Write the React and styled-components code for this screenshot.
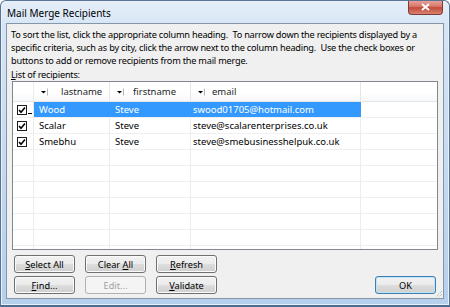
import React from 'react';
import styled, { createGlobalStyle } from 'styled-components';

const GlobalStyle = createGlobalStyle`
    html, body {
        margin: 0;
        padding: 0;
        background: #ffffff;
    }
    body {
        font-family: "Noto Sans", "Open Sans", sans-serif;
    }
`;

const columns = [
    { key: 'lastname', width: 76, headPad: 13, cellPad: 5 },
    { key: 'firstname', width: 81, headPad: 9, cellPad: 5 },
    { key: 'email', width: 170, headPad: 7, cellPad: 2 },
];

const recipients = [
    { lastname: 'Wood', firstname: 'Steve', email: 'swood01705@hotmail.com', selected: true },
    { lastname: 'Scalar', firstname: 'Steve', email: 'steve@scalarenterprises.co.uk' },
    { lastname: 'Smebhu', firstname: 'Steve', email: 'steve@smebusinesshelpuk.co.uk' },
];

const DropArrow = () => (
    <svg width="8" height="8" viewBox="0 0 8 8">
        <path d="M1 3 L6 3 L3.5 5.5 Z" fill="#000" />
        <line x1="7.5" y1="0.5" x2="7.5" y2="7.5" stroke="#b8b8b8" />
    </svg>
);

const CheckIcon = () => (
    <svg width="8" height="8" viewBox="0 0 8 8">
        <path d="M1 4 L3 6.2 L7 1.5" fill="none" stroke="#000" strokeWidth="1.6" />
    </svg>
);

export default function App() {
    const emptyRows = [...Array(7)];

    return (
        <>
            <GlobalStyle />
            <Window>
                <TitleBar>
                    <Title>Mail Merge Recipients</Title>
                    <CloseButton>
                        <svg width="9" height="8" viewBox="0 0 9 8">
                            <path d="M1 1 L8 7 M8 1 L1 7" stroke="#fff" strokeWidth="2" />
                        </svg>
                    </CloseButton>
                </TitleBar>
                <Client>
                    <Description>
                        To sort the list, click the appropriate column heading.&nbsp; To narrow down the recipients displayed by a<br />
                        specific criteria, such as by city, click the arrow next to the column heading.&nbsp; Use the check boxes or<br />
                        buttons to add or remove recipients from the mail merge.
                    </Description>
                    <Label><u>L</u>ist of recipients:</Label>
                    <Grid>
                        <HeaderRow>
                            <CheckCell />
                            {columns.map(col => (
                                <HeadCell key={col.key} $width={col.width}>
                                    <DropArrow />
                                    <HeadText $pad={col.headPad}>{col.key}</HeadText>
                                </HeadCell>
                            ))}
                            <FillCell />
                        </HeaderRow>
                        {recipients.map(r => (
                            <Row key={r.lastname}>
                                <CheckCell>
                                    <CheckBox><CheckIcon /></CheckBox>
                                    {r.selected && <FocusMark />}
                                </CheckCell>
                                {columns.map(col => (
                                    <Cell key={col.key} $width={col.width} $pad={col.cellPad} $selected={r.selected}>
                                        {r[col.key]}
                                    </Cell>
                                ))}
                                <FillCell />
                            </Row>
                        ))}
                        {emptyRows.map((_, i) => (
                            <Row key={i}>
                                <CheckCell />
                                {columns.map(col => (
                                    <Cell key={col.key} $width={col.width} $pad={col.cellPad} />
                                ))}
                                <FillCell />
                            </Row>
                        ))}
                    </Grid>
                    <Footer>
                        <ButtonGrid>
                            <Button><u>S</u>elect All</Button>
                            <Button>Clear <u>A</u>ll</Button>
                            <Button><u>R</u>efresh</Button>
                            <Button><u>F</u>ind...</Button>
                            <Button disabled>Edit...</Button>
                            <Button><u>V</u>alidate</Button>
                        </ButtonGrid>
                        <OkButton>OK</OkButton>
                    </Footer>
                    <Grip>
                        <svg width="8" height="8" viewBox="0 0 8 8">
                            <path d="M7 1 L1 7 M7 4 L4 7" stroke="#9aa6b3" strokeWidth="1" strokeDasharray="1 1" />
                        </svg>
                    </Grip>
                </Client>
            </Window>
        </>
    );
}

const Window = styled.div`
    width: 450px;
    height: 307px;
    box-sizing: border-box;
    display: flex;
    flex-direction: column;
    border: 1px solid #5a7594;
    border-bottom: 2px solid #4b6d93;
    border-radius: 6px 6px 0 0;
    background: linear-gradient(180deg, #e6eff9 0%, #d6e5f5 8%, #c3d8ef 60%, #b6cfeb 100%);
    box-shadow: inset 0 0 0 1px #e8f1fb;
    overflow: hidden;
`;

const TitleBar = styled.div`
    height: 22px;
    display: flex;
    align-items: flex-start;
    justify-content: space-between;
    padding: 0 6px 0 6px;
`;

const Title = styled.div`
    font-size: 10px;
    color: #000;
    padding-top: 5px;
    line-height: 14px;
`;

const CloseButton = styled.div`
    width: 35px;
    height: 15px;
    margin-top: -1px;
    box-sizing: border-box;
    border: 1px solid #7e3b3b;
    border-top: none;
    border-radius: 0 0 4px 4px;
    background: linear-gradient(180deg, #e9a99f 0%, #d8786b 45%, #c24b3c 55%, #d9826f 100%);
    display: flex;
    align-items: center;
    justify-content: center;
`;

const Client = styled.div`
    position: relative;
    flex: 1;
    margin: 0 5px 6px 5px;
    border: 1px solid #8596a9;
    background: #f0f0f0;
    padding: 4px 6px 0 4px;
    display: flex;
    flex-direction: column;
`;

const Description = styled.div`
    font-size: 9.2px;
    letter-spacing: -0.22px;
    line-height: 13px;
    color: #000;
    white-space: nowrap;
`;

const Label = styled.div`
    font-size: 9.2px;
    letter-spacing: -0.22px;
    line-height: 13px;
    color: #000;
    margin-top: 1px;
`;

const Grid = styled.div`
    margin-left: 1px;
    width: 426px;
    height: 169px;
    box-sizing: border-box;
    border: 1px solid #828790;
    background: #fff;
    overflow: hidden;
`;

const HeaderRow = styled.div`
    display: flex;
    height: 19px;
    border-bottom: 1px solid #e5e5e5;
    background: linear-gradient(180deg, #ffffff 0%, #ffffff 50%, #f7f8fa 100%);
`;

const Row = styled.div`
    display: flex;
    height: 16px;
    box-sizing: border-box;
    border-bottom: 1px solid #f0f0f0;
`;

const CheckCell = styled.div`
    position: relative;
    width: 21px;
    flex-shrink: 0;
    border-right: 1px solid #ececec;
    display: flex;
    align-items: center;
    padding-left: 4px;
    box-sizing: border-box;
`;

const CheckBox = styled.div`
    width: 10px;
    height: 10px;
    box-sizing: border-box;
    border: 1px solid #1e1e1e;
    background: #fff;
    display: flex;
    align-items: center;
    justify-content: center;
`;

const FocusMark = styled.div`
    position: absolute;
    right: 1px;
    bottom: 3px;
    width: 4px;
    height: 1px;
    background: #000;
`;

const HeadCell = styled.div`
    width: ${p => p.$width}px;
    flex-shrink: 0;
    box-sizing: border-box;
    border-right: 1px solid #e5e5e5;
    display: flex;
    align-items: center;
    padding-left: 6px;
`;

const HeadText = styled.span`
    font-size: 9.5px;
    color: #1e1e1e;
    margin-left: ${p => p.$pad}px;
`;

const Cell = styled.div`
    width: ${p => p.$width}px;
    flex-shrink: 0;
    box-sizing: border-box;
    border-right: 1px solid ${p => (p.$selected ? '#3399ff' : '#ececec')};
    background: ${p => (p.$selected ? '#3399ff' : 'transparent')};
    color: ${p => (p.$selected ? '#fff' : '#000')};
    font-size: 9.5px;
    line-height: 15px;
    padding-left: ${p => p.$pad}px;
    white-space: nowrap;
    overflow: hidden;
`;

const FillCell = styled.div`
    flex: 1;
`;

const Footer = styled.div`
    display: flex;
    align-items: flex-end;
    justify-content: space-between;
    margin-top: 5px;
    padding-left: 3px;
    padding-right: 1px;
`;

const ButtonGrid = styled.div`
    display: grid;
    grid-template-columns: repeat(3, 61px);
    column-gap: 10px;
    row-gap: 3px;
`;

const Button = styled.button`
    height: 18px;
    padding: 0;
    box-sizing: border-box;
    border: 1px solid #707070;
    border-radius: 3px;
    background: linear-gradient(180deg, #f2f2f2 0%, #ebebeb 48%, #dddddd 52%, #cfcfcf 100%);
    box-shadow: inset 0 0 0 1px #fbfbfb;
    font-family: "Noto Sans", "Open Sans", sans-serif;
    font-size: 9.2px;
    color: #000;

    &:disabled {
        border-color: #adb2b5;
        background: #f4f4f4;
        color: #a0a0a0;
        box-shadow: none;
    }
`;

const OkButton = styled(Button)`
    width: 61px;
    border-color: #3c7fb1;
    background: linear-gradient(180deg, #f2f2f2 0%, #ebebeb 48%, #dddddd 52%, #cfcfcf 100%);
    box-shadow: inset 0 0 0 1px #bfe3f7;
`;

const Grip = styled.div`
    position: absolute;
    right: 0;
    bottom: 0;
    width: 8px;
    height: 8px;
    line-height: 0;
`;
